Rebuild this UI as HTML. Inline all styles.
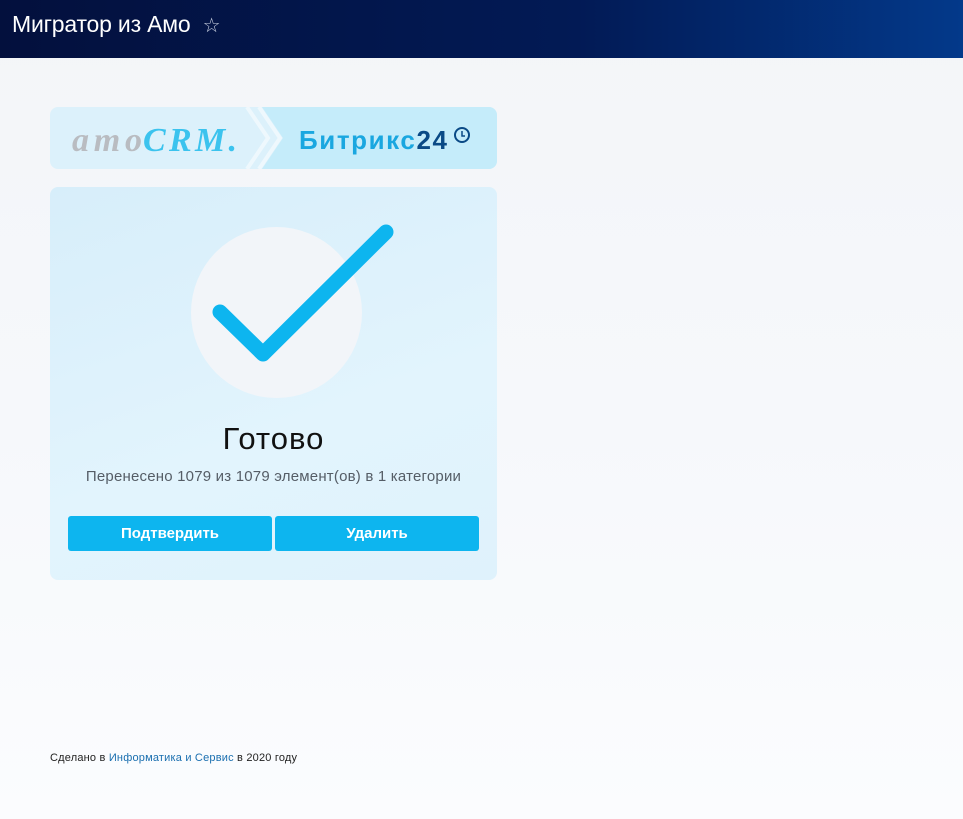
<!DOCTYPE html>
<html><head><meta charset="utf-8"><style>
*{margin:0;padding:0;box-sizing:border-box}
body{width:963px;height:819px;overflow:hidden;font-family:"Liberation Sans",sans-serif;background:linear-gradient(180deg,#f3f5f8 0%,#f6f8fb 50%,#fbfcfe 100%);position:relative}
.hdr{height:58px;background:linear-gradient(90deg,#03103d 0%,#021a55 60%,#03398a 100%);color:#fff;font-size:23px;padding:11px 0 0 12px;letter-spacing:-0.2px}
.hdr span{font-size:20px;color:#c8d0e0;margin-left:6px}
.banner{position:absolute;left:50px;top:107px;width:447px;height:62px;border-radius:8px;background:#dcf1fb;overflow:hidden}
.card{position:absolute;left:50px;top:187px;width:447px;height:393px;border-radius:8px;background:linear-gradient(160deg,#d7eefa,#e2f4fd 60%,#dff2fc)}
.circ{position:absolute;left:141px;top:40px;width:171px;height:171px;border-radius:50%;background:#f2f5f9}
.t{position:absolute;left:0;right:0;top:234px;text-align:center;font-size:31px;color:#111;letter-spacing:1px}
.s{position:absolute;left:0;right:0;top:281px;text-align:center;font-size:15px;color:#555d66;letter-spacing:0.2px}
.b{position:absolute;top:329px;height:35px;width:204px;background:#0db5ef;border-radius:3px;color:#fff;font-size:15px;font-weight:bold;text-align:center;line-height:35px}
.f{position:absolute;left:50px;top:752px;font-size:11px;color:#222;letter-spacing:0.2px}
.f a{color:#1a6fb0;text-decoration:none}
</style></head><body>
<div class="hdr">Мигратор из Амо <span>☆</span></div>
<div class="banner">
<svg style="position:absolute;left:0;top:0" width="447" height="62">
<polygon points="212,0 447,0 447,62 212,62 233,31" fill="#c5ecfa"/>
<polyline points="197,0 218,31 197,62" fill="none" stroke="#eef8fd" stroke-width="4"/><polyline points="209,0 230,31 209,62" fill="none" stroke="#eef8fd" stroke-width="4"/>
<text x="22" y="44" font-family="Liberation Serif,serif" font-style="italic" font-weight="bold" font-size="34" fill="#b9bcc1" textLength="70">amo</text>
<text x="93" y="44" font-family="Liberation Serif,serif" font-style="italic" font-weight="bold" font-size="34" fill="#3bc3ee" textLength="94">CRM.</text>
<text x="249" y="42" font-family="Liberation Sans,sans-serif" font-weight="bold" font-size="26" fill="#1aa7e0" textLength="148">Битрикс<tspan fill="#0a4a86">24</tspan></text>
<circle cx="412" cy="28" r="7" fill="none" stroke="#0a4a86" stroke-width="2"/><polyline points="412,24 412,29 415,29" fill="none" stroke="#0a4a86" stroke-width="1.5"/>
</svg></div>
<div class="card">
<div class="circ"></div>
<svg style="position:absolute;left:0;top:0" width="447" height="220"><polyline points="170,125 213,167 336,45" fill="none" stroke="#0db5ef" stroke-width="15" stroke-linecap="round" stroke-linejoin="round"/></svg>
<div class="t">Готово</div>
<div class="s">Перенесено 1079 из 1079 элемент(ов) в 1 категории</div>
<div class="b" style="left:18px">Подтвердить</div>
<div class="b" style="left:225px">Удалить</div>
</div>
<div class="f">Сделано в <a>Информатика и Сервис</a> в 2020 году</div>
</body></html>
